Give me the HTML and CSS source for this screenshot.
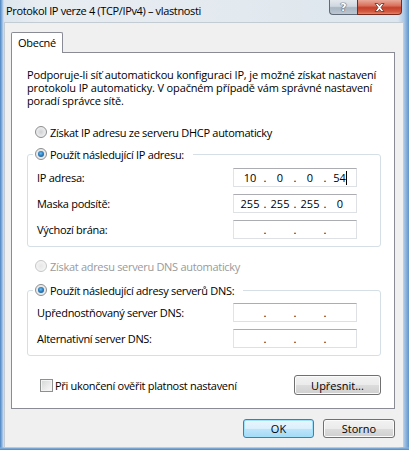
FILE: index.html
```html
<!DOCTYPE html>
<html lang="cs">
<head>
<meta charset="utf-8">
<title>Protokol IP verze 4</title>
<link rel="stylesheet" href="styles.css">
</head>
<body>
<div class="window">
  <div class="titlebar">
    <span class="title">Protokol IP verze 4 (TCP/IPv4) – vlastnosti</span>
    <div class="caption">
      <span class="cap help">?</span>
      <span class="cap close">
        <svg width="11" height="9" viewBox="0 0 11 9"><path d="M1 0.5 H3.8 L5.5 2.6 L7.2 0.5 H10 L7 4.5 L10 8.5 H7.2 L5.5 6.4 L3.8 8.5 H1 L4 4.5 Z" fill="#fff" stroke="#6a2a1e" stroke-width="0.8" stroke-linejoin="round"/></svg>
      </span>
    </div>
  </div>
  <div class="client">
    <div class="tabs"><div class="tab">Obecné</div></div>
    <div class="panel">
      <p class="desc">Podporuje-li síť automatickou konfiguraci IP, je možné získat nastavení<br>protokolu IP automaticky. V opačném případě vám správné nastavení<br>poradí správce sítě.</p>
      <div class="radio-row first"><span class="radio"></span><span>Získat IP adresu ze serveru DHCP automaticky</span></div>
      <fieldset class="group g1">
        <legend><span class="radio checked"></span><span>Použít následující IP adresu:</span></legend>
        <div class="field"><span>IP adresa:</span>
          <div class="ipbox"><span class="oct">10</span><span class="dot">.</span><span class="oct">0</span><span class="dot">.</span><span class="oct">0</span><span class="dot">.</span><span class="oct">54<i class="caret"></i></span></div>
        </div>
        <div class="field"><span>Maska podsítě:</span>
          <div class="ipbox"><span class="oct">255</span><span class="dot">.</span><span class="oct">255</span><span class="dot">.</span><span class="oct">255</span><span class="dot">.</span><span class="oct">0</span></div>
        </div>
        <div class="field"><span>Výchozí brána:</span>
          <div class="ipbox"><span class="oct"></span><span class="dot">.</span><span class="oct"></span><span class="dot">.</span><span class="oct"></span><span class="dot">.</span><span class="oct"></span></div>
        </div>
      </fieldset>
      <div class="radio-row disabled"><span class="radio"></span><span>Získat adresu serveru DNS automaticky</span></div>
      <fieldset class="group g2">
        <legend><span class="radio checked"></span><span>Použít následující adresy serverů DNS:</span></legend>
        <div class="field"><span>Upřednostňovaný server DNS:</span>
          <div class="ipbox"><span class="oct"></span><span class="dot">.</span><span class="oct"></span><span class="dot">.</span><span class="oct"></span><span class="dot">.</span><span class="oct"></span></div>
        </div>
        <div class="field"><span>Alternativní server DNS:</span>
          <div class="ipbox"><span class="oct"></span><span class="dot">.</span><span class="oct"></span><span class="dot">.</span><span class="oct"></span><span class="dot">.</span><span class="oct"></span></div>
        </div>
      </fieldset>
      <div class="bottom-row">
        <div class="check-row"><span class="checkbox"></span><span>Při ukončení ověřit platnost nastavení</span></div>
        <button class="btn advanced">Upřesnit...</button>
      </div>
    </div>
    <div class="dialog-buttons">
      <button class="btn default ok">OK</button>
      <button class="btn cancel">Storno</button>
    </div>
  </div>
</div>
</body>
</html>
```

FILE: styles.css
```css
* { box-sizing: border-box; }

html, body {
  margin: 0;
  padding: 0;
}

body {
  width: 409px;
  height: 450px;
  overflow: hidden;
  font-family: "Open Sans", "Noto Sans", "DejaVu Sans", sans-serif;
  font-size: 11px;
  letter-spacing: -0.3px;
  color: #000;
}

.window {
  width: 409px;
  height: 450px;
  display: flex;
  flex-direction: column;
  background:
    linear-gradient(to top, #4f86c0 0, #86b1dc 2px, rgba(255,255,255,0) 3px),
    linear-gradient(to right, #4a82bf 0, #8cb6e0 2px, #dce5ee 4px, #e8edf2 40px, #e2e9ef 60%, #dde6ee 398px, #a9c8e6 404px, #5f94ca 409px);
}

.titlebar {
  height: 22px;
  flex: none;
  display: flex;
  align-items: flex-start;
  padding: 0 7px 0 6px;
}

.title {
  font-size: 11px;
  letter-spacing: -0.35px;
  line-height: 21px;
  color: #000;
  white-space: nowrap;
}

.caption {
  margin-left: auto;
  display: flex;
  height: 15px;
}

.cap {
  display: flex;
  align-items: center;
  justify-content: center;
  height: 15px;
  border: 1px solid #5f6b78;
  border-top: none;
}

.help {
  width: 28px;
  border-radius: 0 0 0 4px;
  border-right: none;
  background: linear-gradient(#e3e8ed 0, #cfd7df 45%, #a9b5c1 55%, #bcc7d2 100%);
  color: #fff;
  font-family: "DejaVu Sans", sans-serif;
  font-weight: bold;
  font-size: 11px;
  letter-spacing: 0;
  line-height: 13px;
  text-shadow: 0 0 1px #4a5460, 0 0 1px #4a5460, 0 0 1px #4a5460;
}

.close {
  width: 45px;
  border-color: #7a2a1d;
  border-radius: 0 0 4px 0;
  background: linear-gradient(#e9a89a 0, #d9725d 40%, #c4402a 55%, #d45c42 85%, #e3866c 100%);
}

.close svg { display: block; }

.client {
  flex: 1;
  margin: 0 5px 3px 4px;
  background: #f0f0f0;
  border: 1px solid #c3cbd3;
  border-bottom: none;
  padding: 9px 8px 0 6px;
  display: flex;
  flex-direction: column;
}

.tabs {
  display: flex;
  height: 20px;
  flex: none;
}

.tab {
  width: 52px;
  height: 21px;
  background: #fff;
  border: 1px solid #898c95;
  border-bottom: none;
  border-radius: 2px 2px 0 0;
  text-align: center;
  line-height: 20px;
  position: relative;
  z-index: 1;
}

.panel {
  height: 357px;
  flex: none;
  background: #fff;
  border: 1px solid #898c95;
  padding: 15px 13px 0 15px;
  display: flex;
  flex-direction: column;
}

.desc {
  margin: 0;
  line-height: 13px;
  letter-spacing: -0.15px;
  white-space: nowrap;
}

.radio-row {
  display: flex;
  align-items: center;
  gap: 3px;
  height: 16px;
  padding-left: 8px;
  margin-top: 11px;
}

.radio-row.first { margin-top: 17px; }

.radio-row.disabled { color: #9a9a9a; }

.radio {
  flex: none;
  width: 12px;
  height: 12px;
  border-radius: 50%;
  border: 1px solid #8b8d8f;
  background: radial-gradient(circle at 50% 50%, #cfd1d3 0, #e4e5e6 45%, #f6f6f6 100%);
  position: relative;
  display: inline-block;
}

.radio-row.disabled .radio {
  border-color: #c4c6c8;
  background: radial-gradient(circle at 50% 50%, #e6e7e8 0, #f2f2f2 60%, #fafafa 100%);
}

.radio.checked::after {
  content: "";
  position: absolute;
  left: 2px;
  top: 2px;
  width: 6px;
  height: 6px;
  border-radius: 50%;
  background: radial-gradient(circle at 45% 40%, #6ec0ee 0, #2d7fc1 45%, #17497a 100%);
}

.group {
  margin: 6px 0 0 0;
  border: 1px solid #d5dfe5;
  border-radius: 3px;
  padding: 6px 23px 7px 9px;
  display: flex;
  flex-direction: column;
  gap: 7px;
  min-width: 0;
}

.g2 {
  margin-top: 8px;
  padding-top: 5px;
}

.group legend {
  display: flex;
  align-items: center;
  gap: 3px;
  height: 16px;
  margin-left: -4px;
  padding: 0 9px 0 2px;
}

.field {
  display: flex;
  align-items: center;
  justify-content: space-between;
  height: 19px;
}

.ipbox {
  width: 124px;
  height: 19px;
  display: flex;
  align-items: center;
  padding-left: 6px;
  border: 1px solid #dde1e6;
  border-top-color: #abadb3;
  border-left-color: #e2e3ea;
  background: #fff;
  line-height: 17px;
  letter-spacing: 0;
}

.oct {
  width: 20px;
  text-align: center;
  white-space: nowrap;
}

.dot {
  width: 10px;
  text-align: center;
}

.caret {
  display: inline-block;
  width: 1px;
  height: 14px;
  background: #000;
  vertical-align: -3px;
  margin-left: 0;
}

.bottom-row {
  margin-top: 19px;
  height: 20px;
  display: flex;
  align-items: center;
  justify-content: space-between;
}

.check-row {
  display: flex;
  align-items: center;
  gap: 2px;
  padding-left: 13px;
}

.checkbox {
  width: 13px;
  height: 13px;
  border: 1px solid #8e8f8f;
  background: linear-gradient(135deg, #d4d5d6 0, #ececec 60%, #fbfbfb 100%);
  box-shadow: inset 0 0 0 1px #f4f4f4;
  flex: none;
}

.btn {
  font-family: inherit;
  font-size: 11px;
  letter-spacing: 0;
  color: #000;
  border: 1px solid #707070;
  border-radius: 3px;
  background: linear-gradient(#f2f2f2 0, #ebebeb 50%, #dddddd 50%, #cfcfcf 100%);
  box-shadow: inset 0 0 0 1px #fbfbfb;
  padding: 0;
  line-height: 17px;
  text-align: center;
}

.advanced {
  width: 87px;
  height: 20px;
}

.dialog-buttons {
  margin-top: 10px;
  display: flex;
  justify-content: flex-end;
  gap: 9px;
}

.ok, .cancel {
  height: 19px;
}

.ok { width: 71px; }
.cancel { width: 72px; }

.btn.default {
  border-color: #3c7fb1;
  background: linear-gradient(#eaf6fd 0, #d9f0fc 50%, #bee6fd 50%, #a7d9f5 100%);
  box-shadow: inset 0 0 0 1px #9fe0fb;
}
```
